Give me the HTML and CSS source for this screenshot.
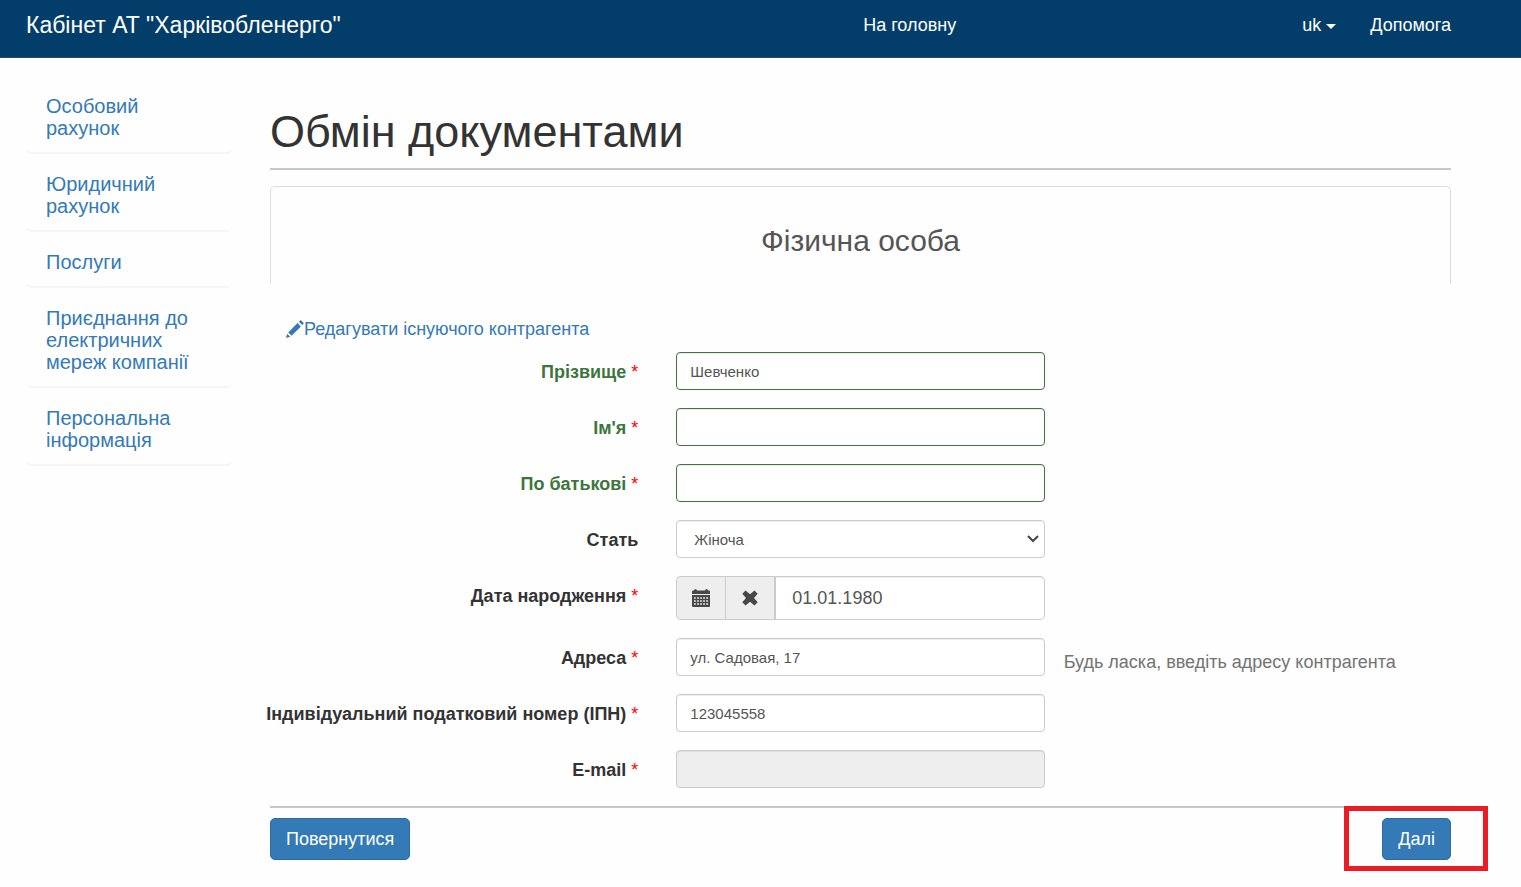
FILE: index.html
```html
<!DOCTYPE html>
<html lang="uk">
<head>
<meta charset="utf-8">
<meta name="viewport" content="width=device-width, initial-scale=1">
<title>Обмін документами</title>
<link rel="stylesheet" href="styles.css">
</head>
<body>
<header class="topbar">
  <a class="brand" href="#">Кабінет АТ "Харківобленерго"</a>
  <nav class="topnav">
    <a href="#">На головну</a>
    <div class="topnav-right">
      <button class="lang" type="button">uk <span class="caret"></span></button>
      <a href="#">Допомога</a>
    </div>
  </nav>
</header>
<div class="page">
  <nav class="sidebar">
    <a href="#">Особовий рахунок</a>
    <a href="#">Юридичний рахунок</a>
    <a href="#">Послуги</a>
    <a href="#">Приєднання до електричних мереж компанії</a>
    <a href="#">Персональна інформація</a>
  </nav>
  <main class="content">
    <h1>Обмін документами</h1>
    <div class="tab"><h2>Фізична особа</h2></div>
    <a class="edit" href="#"><svg class="pencil" viewBox="0 0 18 18" aria-hidden="true"><path d="M0 18l1.200-4.200 3 3zM2.200 12.400l9.300-9.300 3.400 3.400-9.300 9.300zM12.900 1.800l1.200-1.200q.6-.6 1.200 0l2.100 2.100q.6.600 0 1.200l-1.200 1.200z"/></svg>Редагувати існуючого контрагента</a>
    <form class="form">
      <div class="row valid">
        <label for="surname">Прізвище <span class="req">*</span></label>
        <div class="field"><input class="control" id="surname" type="text" value="Шевченко"></div>
      </div>
      <div class="row valid">
        <label for="name">Ім'я <span class="req">*</span></label>
        <div class="field"><input class="control" id="name" type="text"></div>
      </div>
      <div class="row valid">
        <label for="patronymic">По батькові <span class="req">*</span></label>
        <div class="field"><input class="control" id="patronymic" type="text"></div>
      </div>
      <div class="row">
        <label for="sex">Стать</label>
        <div class="field select-wrap">
          <select class="control" id="sex"><option>Жіноча</option><option>Чоловіча</option></select>
          <svg class="chevron" viewBox="0 0 12 8" aria-hidden="true"><path d="M1 1l5 5 5-5"/></svg>
        </div>
      </div>
      <div class="row">
        <label for="birth">Дата народження <span class="req">*</span></label>
        <div class="field date">
          <button class="addon" type="button" aria-label="Календар"><svg viewBox="0 0 18 18" aria-hidden="true"><path fill-rule="evenodd" d="M0 5V2.500q0-1 1-1h1Q2.300 0 3.500 0T5 1.500h8Q13.300 0 14.500 0T16 1.500h1q1 0 1 1V5zM0 6h18v11q0 1-1 1H1q-1 0-1-1zM2 8.200v1.600h1.800V8.200zm3.050 0v1.600h1.800V8.200zm3.050 0v1.600h1.800V8.200zm3.050 0v1.600h1.800V8.200zm3.050 0v1.600H16V8.200zM2 11.200v1.600h1.800v-1.600zm3.050 0v1.600h1.800v-1.600zm3.050 0v1.600h1.800v-1.600zm3.050 0v1.600h1.800v-1.600zm3.050 0v1.600H16v-1.600zM2 14.200v1.600h1.800v-1.600zm3.050 0v1.600h1.800v-1.600zm3.050 0v1.600h1.800v-1.600zm3.050 0v1.600h1.800v-1.600zm3.050 0v1.600H16v-1.600z"/></svg></button>
          <button class="addon" type="button" aria-label="Очистити"><svg viewBox="0 0 18 18" aria-hidden="true"><path d="M4.500 1.500L9 5.200l4.500-3.700 3.200 3.200L13 9l3.700 4.300-3.200 3.200L9 12.800l-4.500 3.700-3.200-3.200L5 9 1.300 4.700z"/></svg></button>
          <input class="date-input" id="birth" type="text" value="01.01.1980">
        </div>
      </div>
      <div class="row">
        <label for="address">Адреса <span class="req">*</span></label>
        <div class="field"><input class="control" id="address" type="text" value="ул. Садовая, 17"></div>
        <p class="help">Будь ласка, введіть адресу контрагента</p>
      </div>
      <div class="row">
        <label for="tax">Індивідуальний податковий номер (ІПН) <span class="req">*</span></label>
        <div class="field"><input class="control" id="tax" type="text" value="123045558"></div>
      </div>
      <div class="row">
        <label for="email">E-mail <span class="req">*</span></label>
        <div class="field"><input class="control" id="email" type="email" disabled></div>
      </div>
      <div class="actions">
        <button class="btn" type="button">Повернутися</button>
        <div class="next"><button class="btn" type="submit">Далі</button></div>
      </div>
    </form>
  </main>
</div>
</body>
</html>
```
FILE: styles.css
```css
* { box-sizing: border-box; }
body {
  margin: 0;
  background: #fefefe;
  color: #333;
  font: 18px/26px "Liberation Sans", Arial, sans-serif;
}
a { color: #337ab7; text-decoration: none; }
button, input, select { font-family: inherit; }

.topbar {
  display: flex;
  align-items: flex-start;
  min-height: 58px;
  padding: 12px 70px 0 26px;
  background: #033e6b;
  border-bottom: 1px solid #2a4a72;
}
.topbar a, .lang { color: #fff; }
.brand { flex: 0 0 58.75%; font-size: 23px; }
.topnav { display: flex; flex: 1; justify-content: space-between; }
.topnav-right { display: flex; gap: 34px; }
.lang {
  display: flex;
  align-items: center;
  gap: 5px;
  padding: 0;
  border: 0;
  background: none;
  font-size: 18px;
  line-height: 26px;
}
.caret {
  margin-top: 3px;
  border: 5px solid transparent;
  border-top-color: #fff;
  border-bottom: 0;
}

.page { display: flex; gap: 38px; padding: 26px 70px 16px 26px; }
.sidebar { display: flex; flex-direction: column; flex: 0 0 206px; }
.sidebar a {
  padding: 11px 40px 13px 20px;
  border-bottom: 2px solid #f5f5f5;
  border-radius: 6px;
  font-size: 20px;
  line-height: 22px;
  margin-bottom: 8px;
}

.content { flex: 1; min-width: 0; }
h1 {
  margin: 22px 0 16px;
  padding-bottom: 11px;
  border-bottom: 2px solid #c8c8c8;
  font-size: 45px;
  line-height: 51px;
  font-weight: 400;
}
.tab {
  padding: 37px 0 26px;
  border: 1px solid #ddd;
  border-bottom: 0;
  border-radius: 5px 5px 0 0;
  text-align: center;
}
h2 { margin: 0; color: #555; font-size: 30px; line-height: 34px; font-weight: 400; }
.edit { display: flex; align-items: center; margin: 32px 16px 10px; }
.pencil { width: 18px; height: 18px; fill: #337ab7; }

.form { display: flex; flex-direction: column; gap: 18px; }
.row {
  display: grid;
  grid-template-columns: repeat(3, minmax(0, 1fr));
  margin: 0 -19px;
}
.row label { padding: 7px 19px 0 0; text-align: right; font-weight: 700; }
.valid label { color: #3c763d; }
.req { color: #f00; font-weight: 400; }
.field { padding: 0 19px; }
.control {
  display: block;
  width: 100%;
  height: 38px;
  padding: 0 13px;
  border: 1px solid #ccc;
  border-radius: 4px;
  background: #fff;
  box-shadow: inset 0 1px 1px rgba(0, 0, 0, .075);
  color: #555;
  font-size: 15px;
}
.valid .control { border-color: #3c763d; }
.control:disabled { background: #eee; }
.select-wrap { position: relative; }
select.control { padding: 0 17px; appearance: none; }
.chevron {
  position: absolute;
  right: 25px;
  top: 15px;
  width: 12px;
  height: 8px;
  fill: none;
  stroke: #444;
  stroke-width: 2;
  pointer-events: none;
}
.date { display: flex; height: 44px; }
.addon {
  display: grid;
  place-items: center;
  width: 49px;
  padding: 0;
  border: 1px solid #ccc;
  border-right: 0;
  background: #eee;
}
.addon:first-child { border-radius: 5px 0 0 5px; }
.addon svg { width: 18px; height: 18px; fill: #484848; }
.date-input {
  flex: 1;
  min-width: 0;
  padding: 0 16px;
  border: 1px solid #ccc;
  border-left-width: 2px;
  border-radius: 0 5px 5px 0;
  background: #fff;
  box-shadow: inset 0 1px 1px rgba(0, 0, 0, .075);
  color: #555;
  font-size: 18px;
}
.help { margin: 0; padding-top: 11px; color: #737373; }
.actions {
  display: flex;
  justify-content: space-between;
  padding-top: 10px;
  border-top: 2px solid #c8c8c8;
}
.btn {
  height: 42px;
  padding: 0 15px;
  border: 1px solid #2e6da4;
  border-radius: 5px;
  background: #337ab7;
  color: #fff;
  font-size: 18px;
}
.next { position: relative; }
.next::after {
  content: "";
  position: absolute;
  inset: -12px -37px -11px -38px;
  border: 5px solid #ed1c24;
  pointer-events: none;
}
```
